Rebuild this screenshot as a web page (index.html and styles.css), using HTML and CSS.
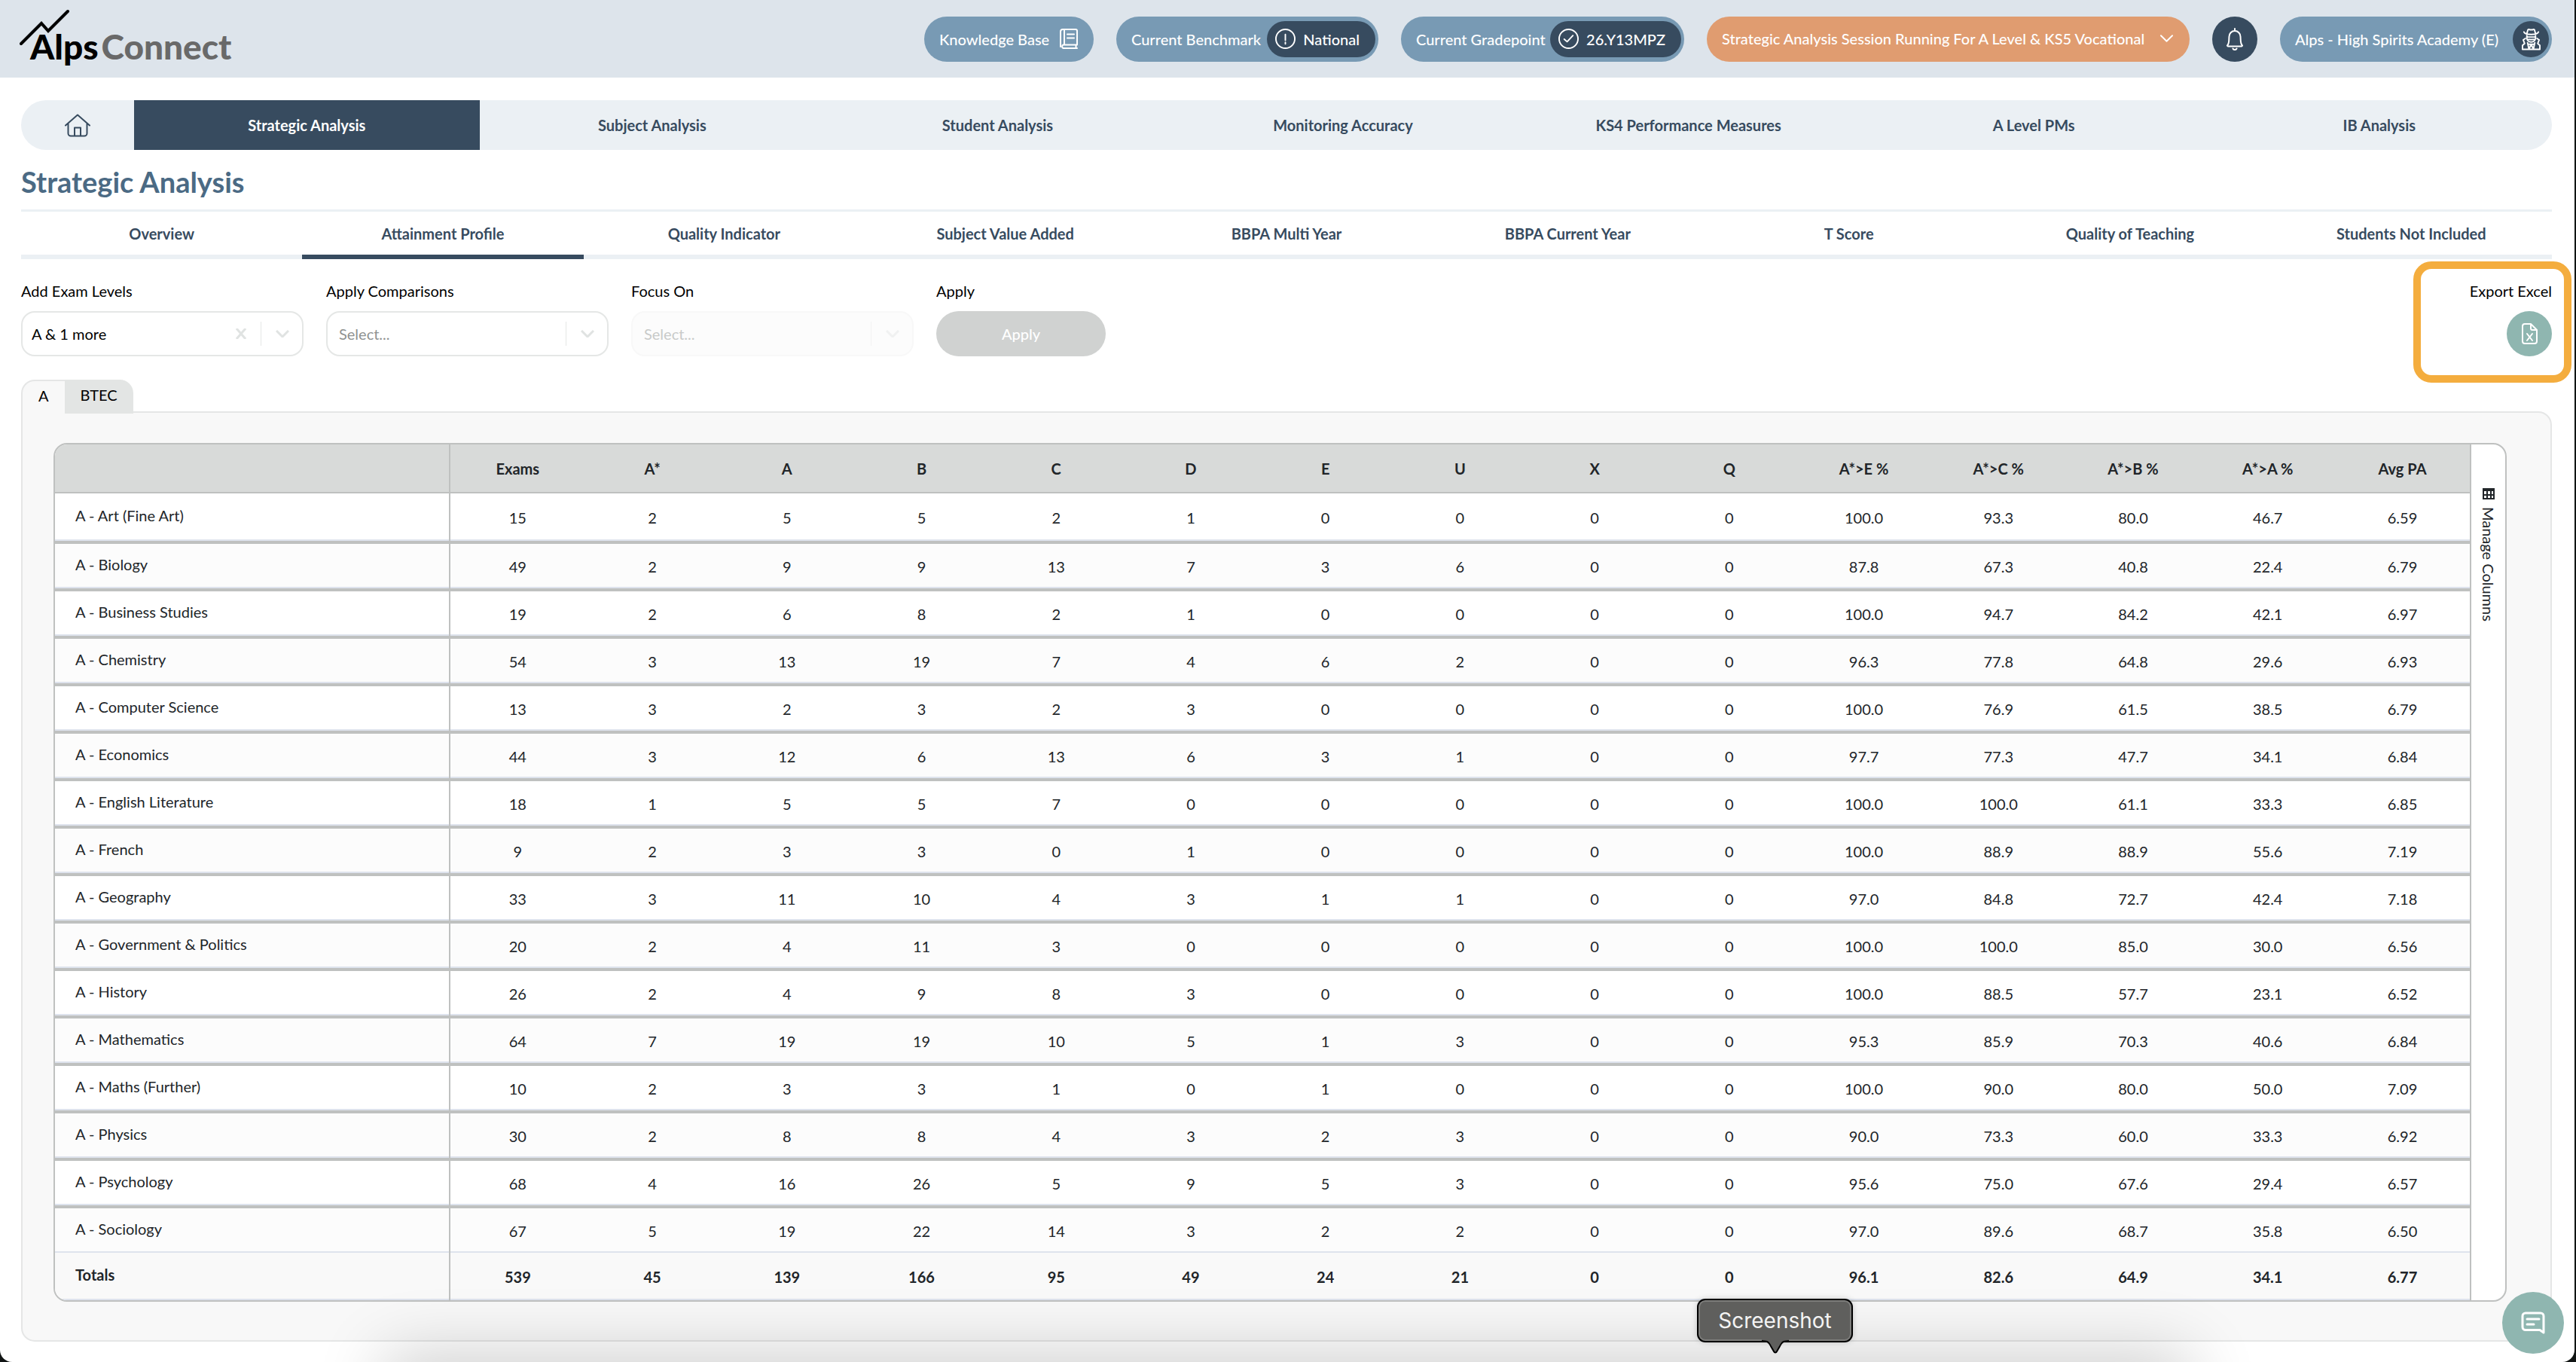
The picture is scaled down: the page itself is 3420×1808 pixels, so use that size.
FILE: index.html
```html
<!DOCTYPE html>
<html lang="en">
<head>
  <meta charset="UTF-8" />
  <meta name="viewport" content="width=device-width, initial-scale=1" />
  <title>Alps Connect - Strategic Analysis</title>
  <link rel="stylesheet" href="styles.css">
</head>

<body>
  <div class="app">
    <header class="topbar">
      <a class="logo" href="#" aria-label="Alps Connect">
        <svg class="logo-peak" viewBox="0 0 68 50" aria-hidden="true"><path d="M2 46 L29 19 L38 29 L64 3" /></svg>
        <span class="logo-alps">Alps</span><span class="logo-connect">Connect</span>
      </a>

      <div class="pills">
        <a class="pill pill-knowledge" href="#">
          Knowledge Base
          <svg class="icon" viewBox="0 0 24 27"><path d="M5 1h16a2 2 0 0 1 2 2v18.500H4.500a2.500 2.500 0 0 0 0 4.500H23M1 24V4a3 3 0 0 1 3-3h2v20.500M23 21.500h-1.500V26M10 7.500h9M10 12.500h9" /></svg>
        </a>
        <a class="pill pill-benchmark" href="#">
          Current Benchmark
          <span class="pill-value">
            <svg class="icon" viewBox="0 0 28 28"><circle cx="14" cy="14" r="13" /><path d="M14 8v8M14 19v2" /></svg>
            National
          </span>
        </a>
        <a class="pill pill-gradepoint" href="#">
          Current Gradepoint
          <span class="pill-value">
            <svg class="icon" viewBox="0 0 28 28"><circle cx="14" cy="14" r="13" /><path d="M8 14.500l4 3.500 8-8.500" /></svg>
            26.Y13MPZ
          </span>
        </a>
        <button class="pill pill-session" type="button">
          Strategic Analysis Session Running For A Level &amp; KS5 Vocational
          <svg class="icon icon-down" viewBox="0 0 18 10"><path d="M1 1l8 8 8-8" /></svg>
        </button>
        <button class="pill-round" type="button" aria-label="Notifications">
          <svg class="icon" viewBox="0 0 24 30"><path d="M12 1v2M2 23.500c3-3 2-7 2.500-12a7.500 7.500 0 0 1 15 0c.5 5-.5 9 2.500 12-.3.600-.8 1-1.500 1h-17c-.7 0-1.200-.4-1.500-1zM9.500 27.500a2.800 2.800 0 0 0 5 0" /></svg>
        </button>
        <button class="pill pill-school" type="button">
          Alps - High Spirits Academy (E)
          <span class="avatar">
            <svg class="icon" viewBox="0 0 26 30"><path d="M3 5c1 3 5 3.500 10 3.500S22 8 23 5M7 7.500L8.500 2c1-1 2-.5 2.500 0h4c.5-.5 1.500-1 2.500 0L19 7.500M7 10v3c0 4 3 6 6 6s6-2 6-6v-3M8 12h10M9 15.500c2-1 2 .5 4 0 2 .5 2-1 4 0M5 14l-3 2 2 5-3 2.500V29h24v-5.500L22 21l2-5-3-2M8 20l2 9 3-7 3 7 2-9M10 22h6" /></svg>
          </span>
        </button>
      </div>
    </header>

    <main class="page">
      <nav class="main-nav" aria-label="Main">
        <a class="home" href="#" aria-label="Home">
          <svg class="icon" viewBox="0 0 34 31"><path d="M1 15.500L17 1.500l16 14M4.500 13v13a3.500 3.500 0 0 0 3.500 3.500h18a3.500 3.500 0 0 0 3.500-3.500V13M13 29.500V18.500h8v11" /></svg>
        </a>
        <a class="active" href="#">Strategic Analysis</a>
        <a href="#">Subject Analysis</a>
        <a href="#">Student Analysis</a>
        <a href="#">Monitoring Accuracy</a>
        <a href="#">KS4 Performance Measures</a>
        <a href="#">A Level PMs</a>
        <a href="#">IB Analysis</a>
      </nav>

      <h1>Strategic Analysis</h1>

      <nav class="sub-nav" aria-label="Strategic Analysis">
        <a href="#">Overview</a>
        <a class="active" href="#">Attainment Profile</a>
        <a href="#">Quality Indicator</a>
        <a href="#">Subject Value Added</a>
        <a href="#">BBPA Multi Year</a>
        <a href="#">BBPA Current Year</a>
        <a href="#">T Score</a>
        <a href="#">Quality of Teaching</a>
        <a href="#">Students Not Included</a>
      </nav>

      <div class="filters">
        <div class="field">
          <label for="levels">Add Exam Levels</label>
          <div class="select-box">
            <select id="levels"><option>A &amp; 1 more</option></select>
            <button class="clear" type="button" aria-label="Clear exam levels"><svg viewBox="0 0 14 14"><path d="M1 0l12 14M13 0L1 14" /></svg></button>
            <span class="arrow"><svg viewBox="0 0 18 10"><path d="M1 1l8 8 8-8" /></svg></span>
          </div>
        </div>
        <div class="field">
          <label for="comparisons">Apply Comparisons</label>
          <div class="select-box placeholder">
            <select id="comparisons"><option>Select...</option></select>
            <span class="arrow"><svg viewBox="0 0 18 10"><path d="M1 1l8 8 8-8" /></svg></span>
          </div>
        </div>
        <div class="field">
          <label for="focus">Focus On</label>
          <div class="select-box placeholder disabled">
            <select id="focus" disabled><option>Select...</option></select>
            <span class="arrow"><svg viewBox="0 0 18 10"><path d="M1 1l8 8 8-8" /></svg></span>
          </div>
        </div>
        <div class="field field-apply">
          <label for="apply">Apply</label>
          <button id="apply" class="apply" type="button">Apply</button>
        </div>
        <div class="field export">
          <label for="export">Export Excel</label>
          <button id="export" class="export-button" type="button">
            <svg class="icon" viewBox="0 0 21 28"><path d="M12 1H4a3 3 0 0 0-3 3v20a3 3 0 0 0 3 3h13a3 3 0 0 0 3-3V9zM12 1v6a2 2 0 0 0 2 2h6" /><path d="M7 14l7 9M14 14l-7 9" /></svg>
          </button>
        </div>
      </div>

      <div class="level-tabs">
        <button class="active" type="button">A</button><button type="button">BTEC</button>
      </div>

      <section class="panel">
        <div class="grid">
          <div class="grid-main">
          <table>
            <thead>
              <tr><th></th><th>Exams</th><th>A*</th><th>A</th><th>B</th><th>C</th><th>D</th><th>E</th><th>U</th><th>X</th><th>Q</th><th>A*&gt;E %</th><th>A*&gt;C %</th><th>A*&gt;B %</th><th>A*&gt;A %</th><th>Avg PA</th></tr>
            </thead>
            <tbody>
              <tr><th>A - Art (Fine Art)</th><td>15</td><td>2</td><td>5</td><td>5</td><td>2</td><td>1</td><td>0</td><td>0</td><td>0</td><td>0</td><td>100.0</td><td>93.3</td><td>80.0</td><td>46.7</td><td>6.59</td></tr>
              <tr><th>A - Biology</th><td>49</td><td>2</td><td>9</td><td>9</td><td>13</td><td>7</td><td>3</td><td>6</td><td>0</td><td>0</td><td>87.8</td><td>67.3</td><td>40.8</td><td>22.4</td><td>6.79</td></tr>
              <tr><th>A - Business Studies</th><td>19</td><td>2</td><td>6</td><td>8</td><td>2</td><td>1</td><td>0</td><td>0</td><td>0</td><td>0</td><td>100.0</td><td>94.7</td><td>84.2</td><td>42.1</td><td>6.97</td></tr>
              <tr><th>A - Chemistry</th><td>54</td><td>3</td><td>13</td><td>19</td><td>7</td><td>4</td><td>6</td><td>2</td><td>0</td><td>0</td><td>96.3</td><td>77.8</td><td>64.8</td><td>29.6</td><td>6.93</td></tr>
              <tr><th>A - Computer Science</th><td>13</td><td>3</td><td>2</td><td>3</td><td>2</td><td>3</td><td>0</td><td>0</td><td>0</td><td>0</td><td>100.0</td><td>76.9</td><td>61.5</td><td>38.5</td><td>6.79</td></tr>
              <tr><th>A - Economics</th><td>44</td><td>3</td><td>12</td><td>6</td><td>13</td><td>6</td><td>3</td><td>1</td><td>0</td><td>0</td><td>97.7</td><td>77.3</td><td>47.7</td><td>34.1</td><td>6.84</td></tr>
              <tr><th>A - English Literature</th><td>18</td><td>1</td><td>5</td><td>5</td><td>7</td><td>0</td><td>0</td><td>0</td><td>0</td><td>0</td><td>100.0</td><td>100.0</td><td>61.1</td><td>33.3</td><td>6.85</td></tr>
              <tr><th>A - French</th><td>9</td><td>2</td><td>3</td><td>3</td><td>0</td><td>1</td><td>0</td><td>0</td><td>0</td><td>0</td><td>100.0</td><td>88.9</td><td>88.9</td><td>55.6</td><td>7.19</td></tr>
              <tr><th>A - Geography</th><td>33</td><td>3</td><td>11</td><td>10</td><td>4</td><td>3</td><td>1</td><td>1</td><td>0</td><td>0</td><td>97.0</td><td>84.8</td><td>72.7</td><td>42.4</td><td>7.18</td></tr>
              <tr><th>A - Government &amp; Politics</th><td>20</td><td>2</td><td>4</td><td>11</td><td>3</td><td>0</td><td>0</td><td>0</td><td>0</td><td>0</td><td>100.0</td><td>100.0</td><td>85.0</td><td>30.0</td><td>6.56</td></tr>
              <tr><th>A - History</th><td>26</td><td>2</td><td>4</td><td>9</td><td>8</td><td>3</td><td>0</td><td>0</td><td>0</td><td>0</td><td>100.0</td><td>88.5</td><td>57.7</td><td>23.1</td><td>6.52</td></tr>
              <tr><th>A - Mathematics</th><td>64</td><td>7</td><td>19</td><td>19</td><td>10</td><td>5</td><td>1</td><td>3</td><td>0</td><td>0</td><td>95.3</td><td>85.9</td><td>70.3</td><td>40.6</td><td>6.84</td></tr>
              <tr><th>A - Maths (Further)</th><td>10</td><td>2</td><td>3</td><td>3</td><td>1</td><td>0</td><td>1</td><td>0</td><td>0</td><td>0</td><td>100.0</td><td>90.0</td><td>80.0</td><td>50.0</td><td>7.09</td></tr>
              <tr><th>A - Physics</th><td>30</td><td>2</td><td>8</td><td>8</td><td>4</td><td>3</td><td>2</td><td>3</td><td>0</td><td>0</td><td>90.0</td><td>73.3</td><td>60.0</td><td>33.3</td><td>6.92</td></tr>
              <tr><th>A - Psychology</th><td>68</td><td>4</td><td>16</td><td>26</td><td>5</td><td>9</td><td>5</td><td>3</td><td>0</td><td>0</td><td>95.6</td><td>75.0</td><td>67.6</td><td>29.4</td><td>6.57</td></tr>
              <tr><th>A - Sociology</th><td>67</td><td>5</td><td>19</td><td>22</td><td>14</td><td>3</td><td>2</td><td>2</td><td>0</td><td>0</td><td>97.0</td><td>89.6</td><td>68.7</td><td>35.8</td><td>6.50</td></tr>
            </tbody>
            <tfoot>
              <tr><th>Totals</th><td>539</td><td>45</td><td>139</td><td>166</td><td>95</td><td>49</td><td>24</td><td>21</td><td>0</td><td>0</td><td>96.1</td><td>82.6</td><td>64.9</td><td>34.1</td><td>6.77</td></tr>
            </tfoot>
          </table>
          </div>
          <div class="side-bar">
            <button class="manage" type="button">
              <svg viewBox="0 0 16 15"><path d="M0 0h16v15H0zM2 4v4h3V4zM7 4v4h3V4zM12 4v4h2V4zM2 10v3h3v-3zM7 10v3h3v-3zM12 10v3h2v-3z" fill-rule="evenodd" /></svg>
              <span>Manage Columns</span>
            </button>
          </div>
        </div>
      </section>
    </main>

    <div class="dock-shadow"></div>
    <div class="dock-tip" role="tooltip">
      Screenshot
      <svg class="dock-tip-tail" viewBox="0 0 36 20"><path class="fill" d="M0 0h36v2c-9 0-10 3-12 7l-4 8c-1 2-3 2-4 0l-4-8c-2-4-3-7-12-7z" /><path class="line" d="M0 3c9 0 10 3 12 7l4 7c1 2 3 2 4 0l4-7c2-4 3-7 12-7" /></svg>
    </div>
    <button class="chat" type="button" aria-label="Chat">
      <svg viewBox="0 0 32 30"><path d="M30 28l-5-3.500H6a4 4 0 0 1-4-4V6a4 4 0 0 1 4-4h20a4 4 0 0 1 4 4zM8 10h16M8 17h9" /></svg>
    </button>
  </div>
</body>
</html>
```
FILE: styles.css
```css
* {
  box-sizing: border-box;
}

body {
  margin: 0;
  background: #111514;
  font-family: Lato, "Open Sans", sans-serif;
  font-size: 20px;
  line-height: 28px;
  color: #000;
}

button,
select {
  font: inherit;
  color: inherit;
  border: none;
  background: none;
  margin: 0;
  padding: 0;
  cursor: pointer;
}

a {
  color: inherit;
  text-decoration: none;
}

svg {
  display: block;
  flex: none;
}

.icon {
  fill: none;
  stroke: currentColor;
  stroke-width: 2;
  stroke-linecap: round;
  stroke-linejoin: round;
}

.app {
  position: relative;
  min-height: 100vh;
  margin-right: 2px;
  background: #fff;
  border-radius: 0 0 16px 16px;
  overflow: hidden;
}

/* top bar */
.topbar {
  display: flex;
  justify-content: space-between;
  align-items: center;
  height: 103px;
  padding: 0 30px 0 28px;
  background: #dde4eb;
}

.logo {
  position: relative;
  display: flex;
  align-items: baseline;
  gap: 4px;
  padding: 20px 0 0 12px;
  font-size: 46px;
  line-height: 48px;
  font-weight: 900;
}

.logo-peak {
  position: absolute;
  left: -2px;
  top: -6px;
  width: 68px;
  height: 50px;
  fill: none;
  stroke: #000;
  stroke-width: 4;
  stroke-linecap: round;
}

.logo-connect {
  color: #696969;
}

.pills {
  display: flex;
  align-items: center;
  gap: 30px;
  font-weight: 500;
  color: #fff;
}

.pill {
  display: flex;
  align-items: center;
  justify-content: space-between;
  height: 60px;
  padding: 0 4px 0 20px;
  border-radius: 30px;
  background: #789ab4;
  white-space: nowrap;
}

.pill-knowledge {
  width: 225px;
  padding-right: 21px;
}

.pill-knowledge .icon {
  width: 24px;
  height: 27px;
}

.pill-benchmark {
  width: 348px;
}

.pill-gradepoint {
  width: 376px;
}

.pill-value {
  display: flex;
  align-items: center;
  gap: 10px;
  height: 48px;
  padding: 0 21px 0 11px;
  border-radius: 24px;
  background: #374b5f;
}

.pill-value .icon {
  width: 27px;
  height: 27px;
}

.pill-session {
  width: 641px;
  padding: 0 22px 2px 20px;
  background: #e09c70;
}

.icon-down {
  width: 17px;
  height: 10px;
}

.pill-round {
  display: flex;
  align-items: center;
  justify-content: center;
  width: 60px;
  height: 60px;
  border-radius: 50%;
  background: #374b5f;
}

.pill-round .icon {
  width: 24px;
  height: 30px;
}

.pill-school {
  width: 361px;
}

.avatar {
  display: flex;
  align-items: center;
  justify-content: center;
  width: 48px;
  height: 48px;
  border-radius: 50%;
  background: #374b5f;
}

.avatar .icon {
  width: 25px;
  height: 30px;
}

.page {
  padding: 30px 30px 27px 28px;
}

/* navigation */
.main-nav {
  display: flex;
  height: 66px;
  border-radius: 33px;
  overflow: hidden;
  background: #ebf0f4;
  color: #374b5f;
  font-weight: 700;
}

.main-nav a {
  flex: 1;
  display: flex;
  align-items: center;
  justify-content: center;
}

.main-nav .home {
  flex: none;
  width: 150px;
}

.home .icon {
  width: 34px;
  height: 31px;
}

.main-nav .active {
  background: #374b5f;
  color: #fff;
}

h1 {
  margin: 20px 0 15px;
  font-size: 38px;
  line-height: 44px;
  font-weight: 700;
  color: #4b6a84;
}

.sub-nav {
  display: flex;
  border-top: 3px solid #ebf0f4;
  color: #374b5f;
  font-weight: 700;
}

.sub-nav a {
  flex: 1;
  height: 63px;
  padding-top: 15px;
  text-align: center;
  border-bottom: 6px solid #ebf0f4;
}

.sub-nav .active {
  border-color: #374b5f;
}

/* filters */
.filters {
  display: flex;
  gap: 30px;
  margin-top: 28px;
}

.field {
  display: flex;
  flex-direction: column;
  gap: 13px;
  width: 375px;
}

.field-apply {
  width: 225px;
}

.select-box {
  position: relative;
  display: flex;
  align-items: center;
  height: 60px;
}

.select-box select {
  appearance: none;
  width: 100%;
  height: 60px;
  padding: 0 80px 0 12px;
  border: 2px solid #e5e7e6;
  border-radius: 18px;
  background: #fff;
  opacity: 1;
}

.placeholder select {
  padding-left: 15px;
  color: #8f9291;
}

.disabled select {
  border-color: #f8f8f8;
  background: #fcfcfc;
  color: #c8cac9;
}

.clear {
  position: absolute;
  right: 76px;
}

.clear svg {
  width: 14px;
  height: 14px;
}

.arrow {
  position: absolute;
  right: 0;
  display: flex;
  align-items: center;
  height: 32px;
  padding: 0 19px;
  border-left: 1px solid #e5e7e6;
  pointer-events: none;
}

.arrow svg {
  width: 18px;
  height: 10px;
}

.clear svg,
.arrow svg {
  fill: none;
  stroke: #e0e3e2;
  stroke-width: 3;
}

.disabled .arrow {
  opacity: 0.4;
}

.apply {
  height: 60px;
  border-radius: 30px;
  background: #d0d2d1;
  color: #fff;
  font-weight: 500;
}

/* highlighted export control */
.export {
  position: relative;
  align-items: flex-end;
  width: auto;
  margin-left: auto;
}

.export::before {
  content: "";
  position: absolute;
  inset: -25px -26px -35px -75px;
  border: 10px solid #f4ad3e;
  border-radius: 24px;
  pointer-events: none;
}

.export-button {
  display: flex;
  align-items: center;
  justify-content: center;
  width: 60px;
  height: 60px;
  border-radius: 50%;
  background: #8fb6b0;
  color: #fff;
}

.export-button .icon {
  width: 21px;
  height: 28px;
}

/* level tabs */
.level-tabs {
  display: flex;
  margin-top: 31px;
}

.level-tabs button {
  position: relative;
  height: 45px;
  padding: 0 21px 5px;
  border-radius: 0 18px 0 0;
  background: #e3e5e4;
}

.level-tabs .active {
  z-index: 1;
  border: solid #e5e6e6;
  border-width: 2px 0 0 2px;
  border-radius: 18px 0 0 0;
  background: #f8f8f8;
}

.panel {
  margin-top: -3px;
  padding: 40px 58px 51px 41px;
  border: 2px solid #e5e6e6;
  border-radius: 0 18px 18px 18px;
  background: #f8f8f8;
}

/* results grid */
.grid {
  display: flex;
  border: 2px solid #bfc1c0;
  border-radius: 18px;
  overflow: hidden;
  background: #fff;
  color: #212529;
}

.grid-main {
  flex: 1;
  min-width: 0;
}

table {
  width: 100%;
  table-layout: fixed;
  border-collapse: separate;
  border-spacing: 0;
}

th,
td {
  height: 63px;
  padding: 1px 0 0;
  text-align: center;
  font-weight: 400;
  border-bottom: 4px solid #bfc1c0;
  box-shadow: inset 0 -2px #dee3ed;
}

th:first-child {
  width: 525px;
  padding: 0 0 6px 27px;
  text-align: left;
  border-right: 2px solid #bfc1c0;
}

thead th {
  height: 65px;
  padding: 0;
  font-weight: 700;
  background: #d8dad9;
  border-bottom-width: 2px;
  box-shadow: none;
}

tbody tr:first-child th,
tbody tr:first-child td {
  height: 67px;
}

tbody tr:nth-child(even) {
  background: #fcfcfc;
}

tbody tr:last-child th,
tbody tr:last-child td {
  height: 59px;
  border-bottom: none;
}

tfoot th,
tfoot td {
  border-bottom: none;
  background: #f9f9f9;
  font-weight: 700;
}

.side-bar {
  width: 47px;
  padding-top: 58px;
  border-left: 2px solid #bfc1c0;
}

.manage {
  display: flex;
  flex-direction: column;
  align-items: center;
  gap: 10px;
  width: 100%;
}

.manage svg {
  width: 16px;
  height: 15px;
  fill: #212529;
}

.manage span {
  writing-mode: vertical-rl;
}

/* overlays along the bottom edge */
.dock-shadow {
  position: absolute;
  left: 540px;
  right: 540px;
  bottom: -60px;
  height: 40px;
  box-shadow: 0 0 90px 30px rgba(0, 0, 0, 0.2);
  pointer-events: none;
}

.dock-tip {
  position: absolute;
  left: 2255px;
  bottom: 28px;
  width: 203px;
  height: 54px;
  border: 2px solid #7d7d7b;
  border-radius: 9px;
  background: #5f5f5d;
  box-shadow: 0 0 0 2px #000, 0 0 10px rgba(0, 0, 0, 0.3);
  font-family: Inter, sans-serif;
  font-size: 28px;
  line-height: 50px;
  text-align: center;
  color: #f4f4f4;
}

.dock-tip-tail {
  position: absolute;
  left: 82px;
  top: 49px;
  width: 36px;
  height: 20px;
}

.dock-tip-tail .fill {
  fill: #5f5f5d;
}

.dock-tip-tail .line {
  fill: none;
  stroke: #000;
  stroke-width: 2;
}

.chat {
  position: absolute;
  right: 14px;
  bottom: 11px;
  display: flex;
  align-items: center;
  justify-content: center;
  width: 82px;
  height: 82px;
  border-radius: 50%;
  background: #8fb6b0;
}

.chat svg {
  width: 32px;
  height: 30px;
  fill: none;
  stroke: #fff;
  stroke-width: 3;
  stroke-linecap: round;
  stroke-linejoin: round;
}
```
